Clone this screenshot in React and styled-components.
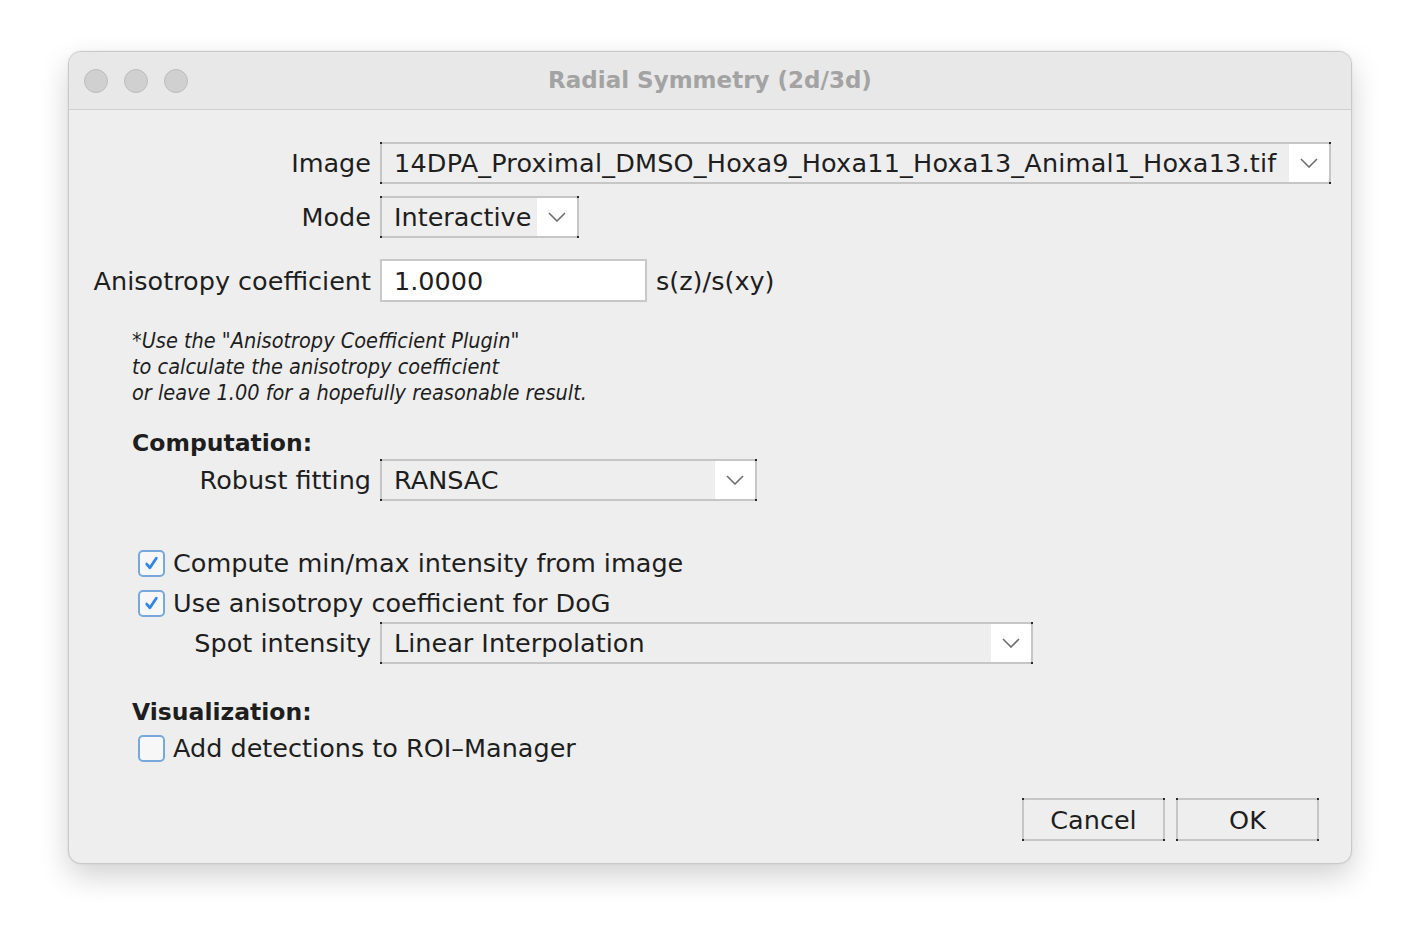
import React from "react";
import styled, { createGlobalStyle } from "styled-components";

const GlobalStyle = createGlobalStyle`
  html, body {
    margin: 0;
    padding: 0;
    background: #ffffff;
  }
  body {
    font-family: "DejaVu Sans", sans-serif;
    color: #1e1e1e;
  }
`;

const Page = styled.div`
  width: 1420px;
  height: 948px;
  padding: 51px 0 0 68px;
  box-sizing: border-box;
`;

const Window = styled.div`
  width: 1284px;
  height: 813px;
  border-radius: 13px;
  background: #eeeeee;
  border: 1px solid #c9c9c9;
  box-sizing: border-box;
  box-shadow: 0 12px 30px rgba(0, 0, 0, 0.18), 0 0 2px rgba(0, 0, 0, 0.1);
  overflow: hidden;
  display: flex;
  flex-direction: column;
`;

const TitleBar = styled.div`
  height: 57px;
  flex: none;
  background: #e8e8e8;
  border-bottom: 1px solid #cfcfcf;
  display: flex;
  align-items: center;
  padding-left: 15px;
  position: relative;
`;

const Lights = styled.div`
  display: flex;
  gap: 16px;
`;

const Light = styled.span`
  width: 24px;
  height: 24px;
  border-radius: 50%;
  background: #d0d0d0;
  border: 1px solid #bdbdbd;
  box-sizing: border-box;
`;

const Title = styled.div`
  position: absolute;
  inset: 0;
  display: flex;
  align-items: center;
  justify-content: center;
  font-size: 23px;
  font-weight: 700;
  color: #a3a3a3;
  padding-bottom: 2px;
  pointer-events: none;
`;

const Body = styled.div`
  flex: 1;
  padding: 32px 22px 0 22px;
  display: flex;
  flex-direction: column;
`;

const Row = styled.div`
  display: grid;
  grid-template-columns: 280px auto auto;
  column-gap: 9px;
  align-items: center;
  justify-content: start;
  margin-top: ${(p) => p.$top || 0}px;
`;

const Label = styled.div`
  font-size: 25.5px;
  text-align: right;
  white-space: nowrap;
`;

const Combo = styled.div`
  position: relative;
  width: ${(p) => p.$w}px;
  height: 42px;
  box-sizing: border-box;
  border: 2px solid #c6c6c6;
  border-radius: 3px;
  background: #eeeeee;
  display: flex;
  align-items: center;
  &::before {
    content: "";
    position: absolute;
    inset: -2px;
    pointer-events: none;
    background:
      linear-gradient(#2a2a2a, #2a2a2a) left top / 2px 2px no-repeat,
      linear-gradient(#2a2a2a, #2a2a2a) right top / 2px 2px no-repeat,
      linear-gradient(#2a2a2a, #2a2a2a) left bottom / 2px 2px no-repeat,
      linear-gradient(#2a2a2a, #2a2a2a) right bottom / 2px 2px no-repeat;
  }
`;

const ComboText = styled.div`
  flex: 1;
  padding-left: 12px;
  font-size: 25.5px;
  letter-spacing: ${(p) => p.$ls || 0}px;
  white-space: nowrap;
  overflow: hidden;
`;

const ArrowBox = styled.div`
  width: 40px;
  align-self: stretch;
  background: #ffffff;
  border-radius: 0 2px 2px 0;
  display: flex;
  align-items: center;
  justify-content: center;
`;

const TextField = styled.div`
  width: 267px;
  height: 43px;
  box-sizing: border-box;
  border: 2px solid #c8c8c8;
  background: #ffffff;
  font-size: 25.5px;
  display: flex;
  align-items: center;
  padding-left: 12px;
`;

const Unit = styled.div`
  font-size: 25.5px;
  white-space: nowrap;
`;

const Note = styled.div`
  margin: 26px 0 0 41px;
  font-family: "DejaVu Sans Condensed", "DejaVu Sans", sans-serif;
  font-stretch: condensed;
  font-size: 21.5px;
  font-style: italic;
  line-height: 26px;
`;

const Heading = styled.div`
  margin: ${(p) => p.$top}px 0 0 41px;
  font-size: 23.5px;
  font-weight: 700;
  line-height: 30px;
`;

const CheckRow = styled.label`
  display: flex;
  align-items: center;
  gap: 8px;
  margin: ${(p) => p.$top}px 0 0 47px;
  height: 30px;
  font-size: 25.5px;
`;

const Box = styled.span`
  width: 27px;
  height: 27px;
  box-sizing: border-box;
  border: 2px solid #77a8dc;
  border-radius: 5px;
  background: #f7f7f7;
  display: flex;
  align-items: center;
  justify-content: center;
`;

const Buttons = styled.div`
  margin-top: 35px;
  display: flex;
  justify-content: flex-end;
  gap: 11px;
  padding-right: 10px;
`;

const Button = styled.div`
  position: relative;
  width: 143px;
  height: 43px;
  box-sizing: border-box;
  border: 2px solid #c6c6c6;
  border-radius: 3px;
  background: #eeeeee;
  font-size: 25.5px;
  display: flex;
  align-items: center;
  justify-content: center;
  &::before {
    content: "";
    position: absolute;
    inset: -2px;
    background:
      linear-gradient(#2a2a2a, #2a2a2a) left top / 2px 2px no-repeat,
      linear-gradient(#2a2a2a, #2a2a2a) right top / 2px 2px no-repeat,
      linear-gradient(#2a2a2a, #2a2a2a) left bottom / 2px 2px no-repeat,
      linear-gradient(#2a2a2a, #2a2a2a) right bottom / 2px 2px no-repeat;
  }
`;

const Chevron = () => (
  <svg width="18" height="10" viewBox="0 0 18 10">
    <path d="M1 1 L9 9 L17 1" fill="none" stroke="#6e6e6e" strokeWidth="1.6" />
  </svg>
);

const Check = () => (
  <svg width="17" height="17" viewBox="0 0 16 16">
    <path
      d="M3.5 8.5 L6.5 12 L12.5 3"
      fill="none"
      stroke="#2f86e8"
      strokeWidth="2.6"
      strokeLinecap="round"
      strokeLinejoin="round"
    />
  </svg>
);

function Select({ width, value, ls }) {
  return (
    <Combo $w={width}>
      <ComboText $ls={ls}>{value}</ComboText>
      <ArrowBox>
        <Chevron />
      </ArrowBox>
    </Combo>
  );
}

function Checkbox({ checked, label, top }) {
  return (
    <CheckRow $top={top}>
      <Box>{checked && <Check />}</Box>
      {label}
    </CheckRow>
  );
}

export default function App() {
  return (
    <Page>
      <GlobalStyle />
      <Window>
        <TitleBar>
          <Lights>
            <Light />
            <Light />
            <Light />
          </Lights>
          <Title>Radial Symmetry (2d/3d)</Title>
        </TitleBar>
        <Body>
          <Row>
            <Label>Image</Label>
            <Select
              width={951}
              ls={0.2}
              value="14DPA_Proximal_DMSO_Hoxa9_Hoxa11_Hoxa13_Animal1_Hoxa13.tif"
            />
          </Row>
          <Row $top={12}>
            <Label>Mode</Label>
            <Select width={199} value="Interactive" />
          </Row>
          <Row $top={21}>
            <Label>Anisotropy coefficient</Label>
            <TextField>1.0000</TextField>
            <Unit>s(z)/s(xy)</Unit>
          </Row>
          <Note>
            *Use the "Anisotropy Coefficient Plugin"
            <br />
            to calculate the anisotropy coefficient
            <br />
            or leave 1.00 for a hopefully reasonable result.
          </Note>
          <Heading $top={22}>Computation:</Heading>
          <Row $top={1}>
            <Label>Robust fitting</Label>
            <Select width={377} value="RANSAC" />
          </Row>
          <Checkbox checked top={47} label="Compute min/max intensity from image" />
          <Checkbox checked top={10} label="Use anisotropy coefficient for DoG" />
          <Row $top={4}>
            <Label>Spot intensity</Label>
            <Select width={653} value="Linear Interpolation" />
          </Row>
          <Heading $top={33}>Visualization:</Heading>
          <Checkbox top={6} label="Add detections to ROI–Manager" />
          <Buttons>
            <Button>Cancel</Button>
            <Button>OK</Button>
          </Buttons>
        </Body>
      </Window>
    </Page>
  );
}
